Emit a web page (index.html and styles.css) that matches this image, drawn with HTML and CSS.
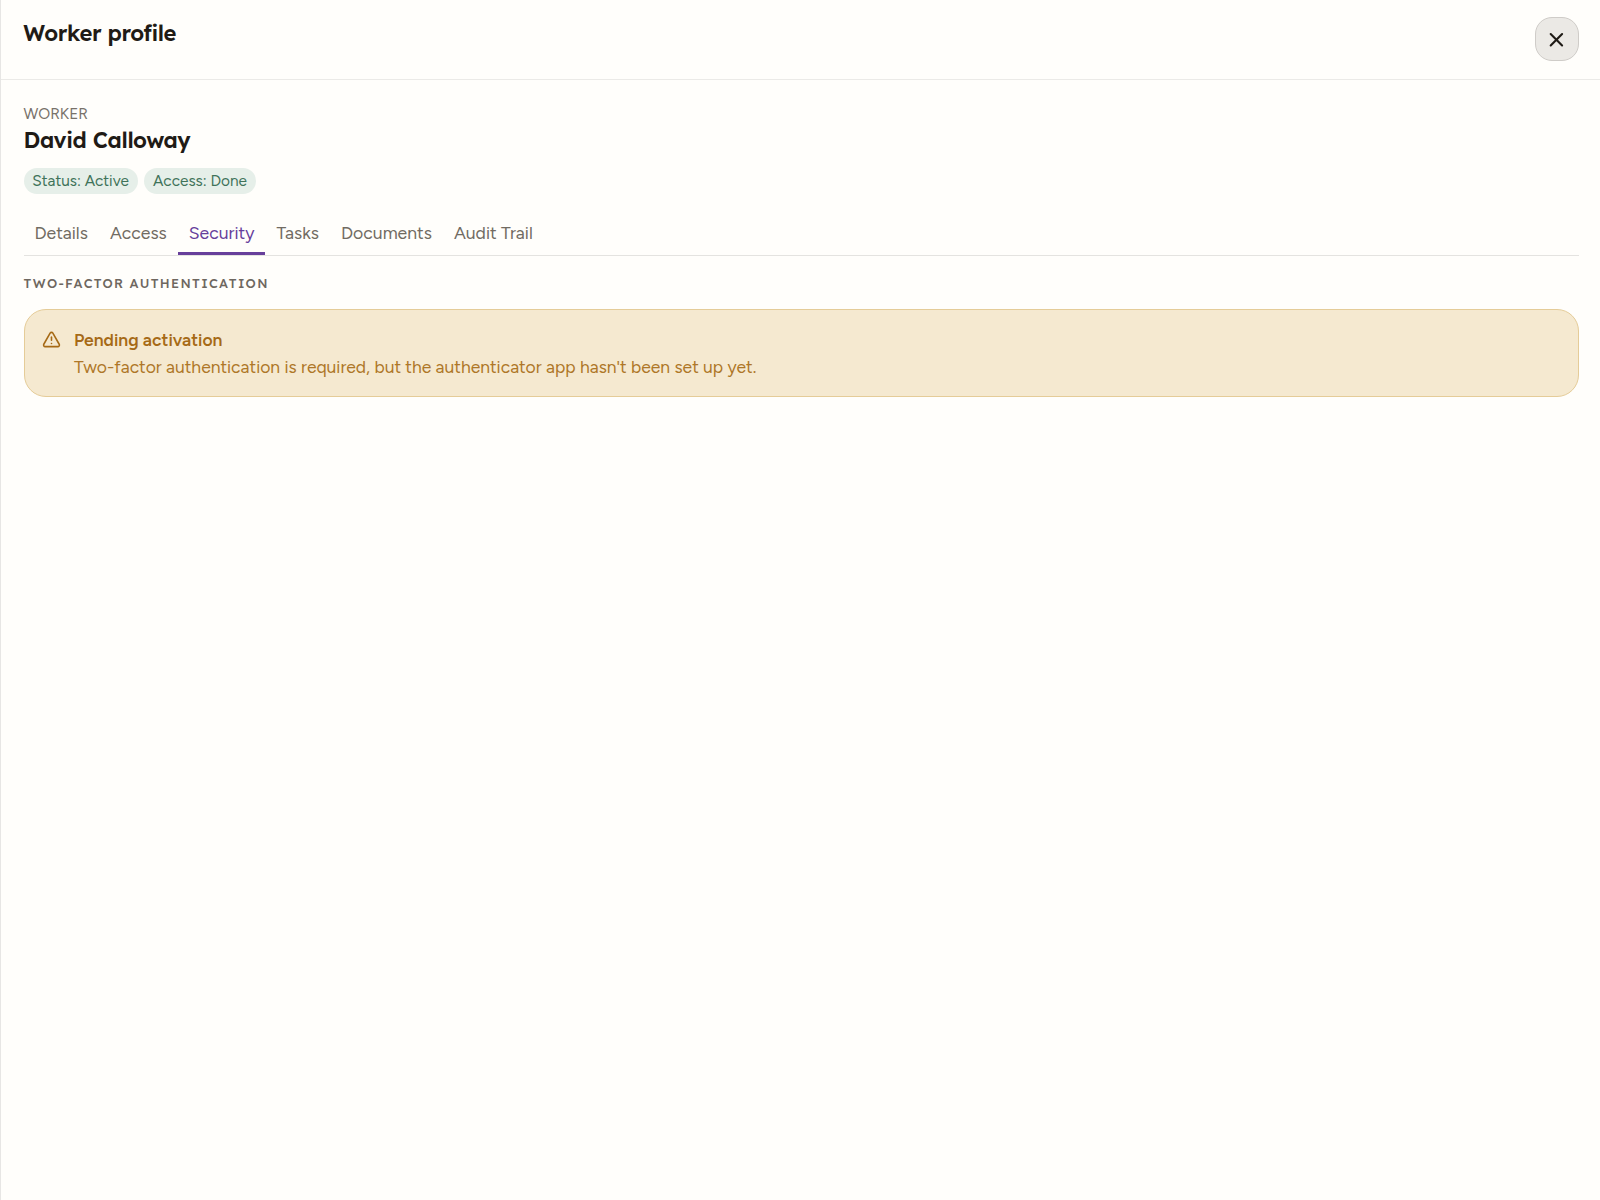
FILE: index.html
```
<!DOCTYPE html>
<html lang="en">
<head>
    <meta charset="UTF-8">
    <meta name="viewport" content="width=device-width, initial-scale=1.0">
    <title>Worker profile</title>
    <link rel="stylesheet" href="styles.css">
</head>
<body>
    <div class="drawer">
        <header class="drawer-header">
            <h1 class="title">Worker profile</h1>
            <button class="close" aria-label="Close">
                <svg width="24" height="24" viewBox="0 0 24 24" fill="none" stroke="currentColor" stroke-width="2.1" stroke-linecap="round" stroke-linejoin="round">
                    <path d="M17.1 7.1 5.7 18.5"/>
                    <path d="m5.7 7.1 11.4 11.4"/>
                </svg>
            </button>
        </header>

        <main class="content">
            <div class="label">WORKER</div>
            <h2 class="name">David Calloway</h2>
            <div class="badges">
                <span class="badge">Status: Active</span>
                <span class="badge">Access: Done</span>
            </div>

            <nav class="tabs">
                <a class="tab">Details</a>
                <a class="tab">Access</a>
                <a class="tab active">Security</a>
                <a class="tab">Tasks</a>
                <a class="tab">Documents</a>
                <a class="tab">Audit Trail</a>
            </nav>

            <h3 class="section-title">TWO-FACTOR AUTHENTICATION</h3>
            <div class="alert">
                <svg class="alert-icon" width="19" height="19" viewBox="0 0 24 24" fill="none" stroke="currentColor" stroke-width="2" stroke-linecap="round" stroke-linejoin="round">
                    <path d="m21.73 18-8-14a2 2 0 0 0-3.48 0l-8 14A2 2 0 0 0 4 21h16a2 2 0 0 0 1.73-3"/>
                    <path d="M12 9v4"/>
                    <path d="M12 17h.01"/>
                </svg>
                <div class="alert-body">
                    <div class="alert-title">Pending activation</div>
                    <div class="alert-text">Two-factor authentication is required, but the authenticator app hasn't been set up yet.</div>
                </div>
            </div>
        </main>
    </div>
</body>
</html>
```
FILE: styles.css
```
*{
    margin: 0;
    padding: 0;
    box-sizing: border-box;
}
body{
    background: #fffefb;
    color: #1f1b16;
    font-family: Figtree, Lato, sans-serif;
}
.drawer{
    min-height: 100vh;
    border-left: 1px solid #e7e6e4;
}
.drawer-header{
    display: flex;
    justify-content: space-between;
    align-items: flex-start;
    height: 80px;
    padding: 17px 21px 0 22.3px;
    border-bottom: 1px solid #ebeae7;
}
.title,
.name{
    font-family: Lexend, Inter, sans-serif;
    font-size: 22px;
    font-weight: 600;
    line-height: 33px;
    letter-spacing: -0.4px;
}
.close{
    display: flex;
    align-items: center;
    justify-content: center;
    width: 44px;
    height: 44px;
    border: 1px solid #cfccc8;
    border-radius: 17px;
    background: #ebe9e5;
    color: #1f1b16;
}
.content{
    padding: 23px 21px 0 22.5px;
}
.label{
    font-size: 15.4px;
    line-height: 22px;
    color: #78716a;
}
.name{
    line-height: 30px;
}
.badges{
    display: flex;
    gap: 6.5px;
    margin-top: 12.5px;
}
.badge{
    height: 26.5px;
    padding: 0 8.8px;
    border-radius: 14px;
    background: #e6efe9;
    color: #3f735a;
    font-size: 15.4px;
    line-height: 26.5px;
}
.tabs{
    display: flex;
    height: 46px;
    margin-top: 16px;
    border-bottom: 1px solid #e4e3e0;
}
.tab{
    height: 45px;
    padding: 0 11px;
    border-bottom: 3px solid transparent;
    color: #716b62;
    font-size: 17.6px;
    line-height: 45px;
}
.tab.active{
    border-color: #673f9b;
    color: #673f9b;
}
.section-title{
    margin-top: 16px;
    font-family: Lexend, Inter, sans-serif;
    font-size: 12.9px;
    font-weight: 500;
    line-height: 22px;
    letter-spacing: 1.35px;
    color: #6e675f;
}
.alert{
    display: flex;
    gap: 12.8px;
    height: 88px;
    margin-top: 15px;
    padding: 17px 17.6px;
    border: 1px solid #e5cc98;
    border-radius: 22px;
    background: #f5e9d0;
    color: #a66a16;
}
.alert-icon{
    margin-top: 2.5px;
}
.alert-title{
    font-size: 17.5px;
    font-weight: 600;
    line-height: 26px;
}
.alert-text{
    font-size: 17.5px;
    line-height: 27px;
    color: #ae7728;
}
```
